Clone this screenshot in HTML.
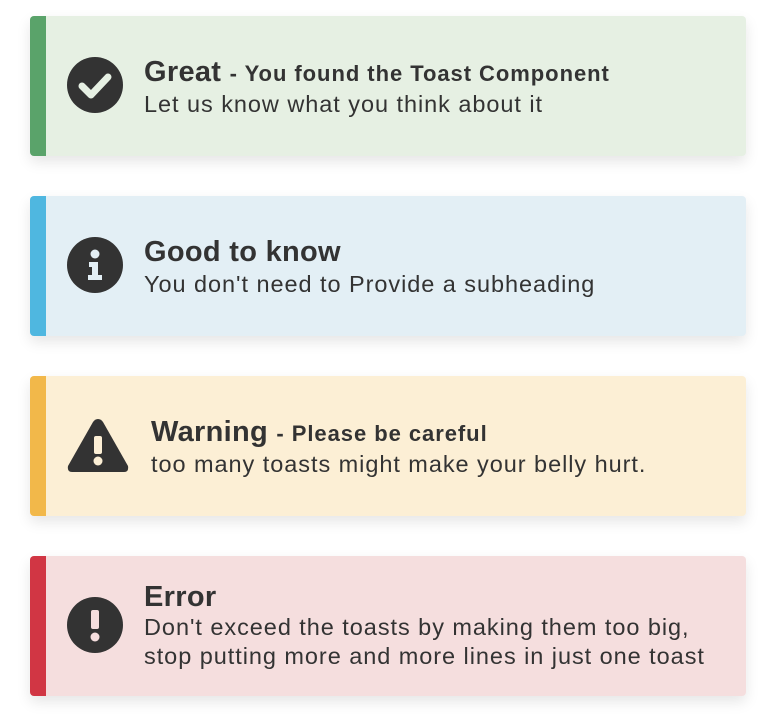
<!DOCTYPE html>
<html><head><style>
body{margin:0;background:#fff;width:776px;height:714px;position:relative;font-family:"Liberation Sans",sans-serif;color:#333;}
.c{position:absolute;left:30px;width:716px;height:140px;border-radius:4px;box-shadow:0 6px 14px rgba(0,0,0,0.10);overflow:hidden}
.c .bar{position:absolute;left:0;top:0;bottom:0;width:16px}
.ic{position:absolute;left:37px}
.t{position:absolute;left:114px;font-size:23.5px;line-height:31px;letter-spacing:0.95px;white-space:nowrap}
.t b{font-size:29px;letter-spacing:0.3px}
.t b small{font-size:22px;letter-spacing:0.95px}
</style></head><body>
<div class="c" style="top:16px;background:#e6f0e3"><div class="bar" style="background:#5aa36a"></div>
<svg class="ic" style="top:41px" width="56" height="56" viewBox="0 0 56 56"><circle cx="28" cy="28" r="28" fill="#333"/><path d="M15 29 L24 38 L41 20" stroke="#e6f0e3" stroke-width="7" fill="none" stroke-linecap="round" stroke-linejoin="round"/></svg>
<div class="t" style="top:41px"><b>Great <small>- You found the Toast Component</small></b><br>Let us know what you think about it</div></div>

<div class="c" style="top:196px;background:#e3eff5"><div class="bar" style="background:#4fb7e0"></div>
<svg class="ic" style="top:41px" width="56" height="56" viewBox="0 0 56 56"><circle cx="28" cy="28" r="28" fill="#333"/><circle cx="28" cy="17" r="4.5" fill="#e3eff5"/><path d="M22 25h9v13h4v5H21v-5h4v-8h-3z" fill="#e3eff5"/></svg>
<div class="t" style="top:41px"><b>Good to know</b><br>You don't need to Provide a subheading</div></div>

<div class="c" style="top:376px;background:#fcefd5"><div class="bar" style="background:#f2b84a"></div>
<svg class="ic" style="top:40px;left:36px" width="64" height="58" viewBox="0 0 64 58"><path d="M32 3 Q35 3 37 6 L62 50 Q63 56 58 56 L6 56 Q1 56 2 50 L27 6 Q29 3 32 3z" fill="#333"/><rect x="28" y="20" width="8" height="18" rx="2" fill="#fcefd5"/><circle cx="32" cy="45" r="4.5" fill="#fcefd5"/></svg>
<div class="t" style="top:41px;left:121px"><b>Warning <small>- Please be careful</small></b><br>too many toasts might make your belly hurt.</div></div>

<div class="c" style="top:556px;background:#f5dede"><div class="bar" style="background:#d13644"></div>
<svg class="ic" style="top:41px" width="56" height="56" viewBox="0 0 56 56"><circle cx="28" cy="28" r="28" fill="#333"/><rect x="24" y="13" width="8" height="19" rx="2" fill="#f5dede"/><circle cx="28" cy="40" r="4.5" fill="#f5dede"/></svg>
<div class="t" style="top:27px;line-height:29px"><b>Error</b><br>Don't exceed the toasts by making them too big,<br>stop putting more and more lines in just one toast</div></div>
</body></html>
